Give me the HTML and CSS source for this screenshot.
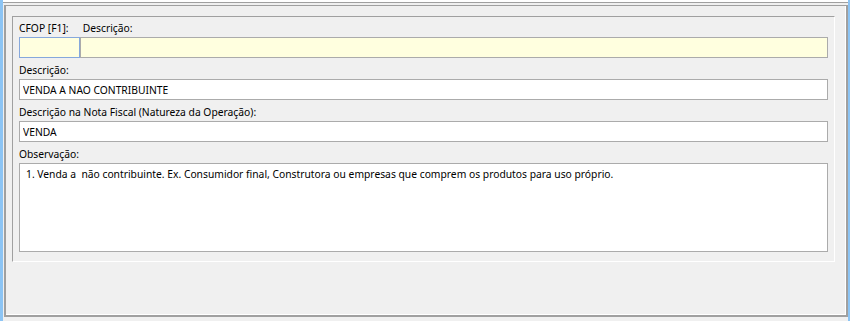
FILE: index.html
```html
<!DOCTYPE html>
<html lang="pt-BR">
<head>
    <meta charset="UTF-8">
    <title>CFOP</title>
    <link rel="stylesheet" href="styles.css">
</head>
<body>

<div class="window">
    <div class="topline"></div>
    <div class="frame">
        <div class="group">
            <div class="label-row">
                <span class="cfop-label">CFOP [F1]:</span>
                <span>Descrição:</span>
            </div>
            <div class="cfop-row">
                <input type="text" class="field yellow cfop" value="">
                <input type="text" class="field yellow" value="">
            </div>

            <div class="label-row">Descrição:</div>
            <input type="text" class="field" value="VENDA A NAO CONTRIBUINTE">

            <div class="label-row">Descrição na Nota Fiscal (Natureza da Operação):</div>
            <input type="text" class="field" value="VENDA">

            <div class="label-row">Observação:</div>
            <textarea class="field memo">1. Venda a  não contribuinte. Ex. Consumidor final, Construtora ou empresas que comprem os produtos para uso próprio.</textarea>
        </div>
    </div>
</div>

</body>
</html>
```

FILE: styles.css
```css
* {
    box-sizing: border-box;
}

body {
    margin: 0;
    background-color: #f0f0f0;
    font-family: "Noto Sans", "Open Sans", sans-serif;
    font-size: 10.3px;
    color: #000;
}

.window {
    height: 321px;
    border-left: 3px solid #8cc4f4;
    border-right: 2px solid #8cc4f4;
    padding-left: 1px;
}

.topline {
    height: 3px;
    margin-left: -1px;
    background-color: #fff;
    border-bottom: 1px solid #a0a0a0;
}

.frame {
    margin-top: 2px;
    height: 312px;
    border-top: 1px solid #a0a0a0;
    border-left: 2px solid #a0a0a0;
    border-right: 2px solid #a0a0a0;
    border-bottom: 2px solid #a0a0a0;
    box-shadow: inset -1px -1px 0 #fff;
    padding: 10px 11px 0 6px;
}

.group {
    height: 246px;
    border-top: 1px solid #a0a0a0;
    border-left: 1px solid #a0a0a0;
    border-right: 1px solid #fff;
    border-bottom: 1px solid #fff;
    padding: 4px 6px 0 6px;
}

.label-row {
    height: 14px;
    line-height: 14px;
    margin-top: 5px;
    margin-bottom: 2px;
    white-space: nowrap;
}

.label-row:first-child {
    margin-top: 0;
}

.cfop-label {
    display: inline-block;
    width: 61px;
}

.cfop-row {
    display: flex;
}

.field {
    display: block;
    width: 100%;
    height: 21px;
    margin: 0;
    padding: 0 3px;
    border: 1px solid #ababab;
    background-color: #fff;
    font-family: inherit;
    font-size: inherit;
    color: #000;
    outline: none;
}

.yellow {
    background-color: #ffffdf;
}

.cfop {
    width: 61px;
    flex: none;
    border-color: #86a8dc;
}

.memo {
    height: 89px;
    padding: 3px 6px;
    resize: none;
    line-height: 14px;
}
```
